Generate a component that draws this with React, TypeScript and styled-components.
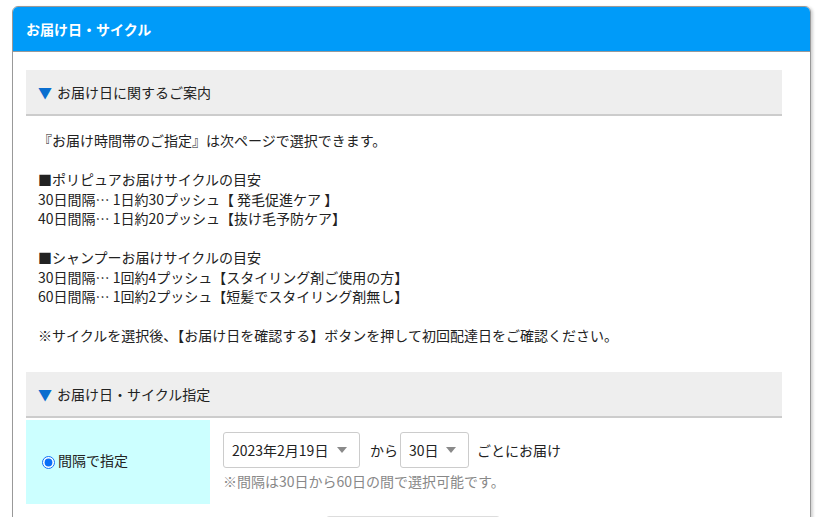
import React from 'react'
import styled, { createGlobalStyle } from 'styled-components'

const GlobalStyle = createGlobalStyle`
  html, body {
    margin: 0;
    background: #ffffff;
  }
  body {
    padding: 6px 12px 0 12px;
    font-family: "Noto Sans CJK JP", "Noto Sans", sans-serif;
    font-size: 14px;
    color: #222222;
    overflow: hidden;
  }
`

const Panel = styled.section`
  border: 1px solid #999999;
  border-radius: 6px 6px 0 0;
  box-shadow: 2px 1px 3px rgba(0, 0, 0, 0.18);
  height: 580px;
  overflow: hidden;
`

const PanelHeader = styled.h2`
  margin: 0;
  height: 44px;
  display: flex;
  align-items: center;
  padding-left: 13px;
  background: #009bf9;
  border-bottom: 1px solid #999999;
  color: #ffffff;
  font-size: 14px;
  font-weight: bold;
`

const PanelBody = styled.div`
  padding: 18px 28px 0 13px;
`

const SectionTitle = styled.h3`
  margin: 0;
  height: 44px;
  display: flex;
  align-items: center;
  padding-left: 12px;
  background: #eeeeee;
  border-bottom: 2px solid #cccccc;
  font-size: 14px;
  font-weight: normal;
  color: #222222;
`

const Marker = styled.span`
  color: #0a6ecf;
  margin-right: 5px;
`

const Guide = styled.div`
  padding: 15px 12px 26px 12px;
  line-height: 19.5px;
`

const Line = styled.p<{ $gap?: boolean }>`
  margin: 0;
  margin-bottom: ${p => (p.$gap ? '19.5px' : '0')};
`

const FormRow = styled.div`
  display: grid;
  grid-template-columns: 184px 1fr;
  margin-top: 2px;
  height: 84px;
`

const LabelCell = styled.label`
  display: flex;
  align-items: center;
  padding: 0 0 4px 16px;
  background: #ccffff;
  gap: 2px;
`

const Radio = styled.input`
  width: 13px;
  height: 13px;
  margin: 6px 1px 0 0;
  accent-color: #0a6ff7;
`

const FieldCell = styled.div`
  padding: 12px 13px 0 13px;
`

const Controls = styled.div`
  display: flex;
  align-items: center;
`

const SelectWrap = styled.div<{ $width: number; $after: number }>`
  position: relative;
  width: ${p => p.$width}px;
  height: 36px;
  margin-right: ${p => p.$after}px;
  &::after {
    content: '';
    position: absolute;
    right: 13px;
    top: 15px;
    border-left: 5px solid transparent;
    border-right: 5px solid transparent;
    border-top: 6px solid #8a8a8a;
    pointer-events: none;
  }
`

const Select = styled.select`
  appearance: none;
  width: 100%;
  height: 100%;
  box-sizing: border-box;
  padding: 0 0 0 8px;
  border: 1px solid #cccccc;
  border-radius: 3px;
  background: #ffffff;
  font-family: inherit;
  font-size: 14px;
  color: #222222;
`

const Joiner = styled.span<{ $after?: number }>`
  margin-right: ${p => p.$after ?? 0}px;
`

const Note = styled.p`
  margin: 3px 0 0 0;
  color: #888888;
  font-size: 14px;
`

const Actions = styled.div`
  display: flex;
  padding: 12px 0 0 300px;
`

// only the top edge of the confirm button falls inside the frame
const ConfirmButton = styled.button`
  width: 174px;
  height: 48px;
  border: 1px solid #dddddd;
  border-radius: 3px;
  background: #ffffff;
`

export default function App() {
  return (
    <>
      <GlobalStyle />
      <Panel>
        <PanelHeader>お届け日・サイクル</PanelHeader>
        <PanelBody>
          <SectionTitle><Marker>▼</Marker>お届け日に関するご案内</SectionTitle>
          <Guide>
            <Line $gap>『お届け時間帯のご指定』は次ページで選択できます。</Line>
            <Line>■ポリピュアお届けサイクルの目安</Line>
            <Line>30日間隔… 1日約30プッシュ【 発毛促進ケア 】</Line>
            <Line $gap>40日間隔… 1日約20プッシュ【抜け毛予防ケア】</Line>
            <Line>■シャンプーお届けサイクルの目安</Line>
            <Line>30日間隔… 1回約4プッシュ【スタイリング剤ご使用の方】</Line>
            <Line $gap>60日間隔… 1回約2プッシュ【短髪でスタイリング剤無し】</Line>
            <Line>※サイクルを選択後、【お届け日を確認する】ボタンを押して初回配達日をご確認ください。</Line>
          </Guide>
          <SectionTitle><Marker>▼</Marker>お届け日・サイクル指定</SectionTitle>
          <FormRow>
            <LabelCell>
              <Radio type="radio" name="cycle" defaultChecked />
              間隔で指定
            </LabelCell>
            <FieldCell>
              <Controls>
                <SelectWrap $width={137} $after={10}>
                  <Select defaultValue="2023-02-19">
                    <option value="2023-02-19">2023年2月19日</option>
                  </Select>
                </SelectWrap>
                <Joiner $after={2}>から</Joiner>
                <SelectWrap $width={69} $after={8}>
                  <Select defaultValue="30">
                    <option value="30">30日</option>
                    <option value="40">40日</option>
                    <option value="60">60日</option>
                  </Select>
                </SelectWrap>
                <Joiner>ごとにお届け</Joiner>
              </Controls>
              <Note>※間隔は30日から60日の間で選択可能です。</Note>
            </FieldCell>
          </FormRow>
          <Actions>
            <ConfirmButton aria-label="お届け日を確認する" />
          </Actions>
        </PanelBody>
      </Panel>
    </>
  )
}
